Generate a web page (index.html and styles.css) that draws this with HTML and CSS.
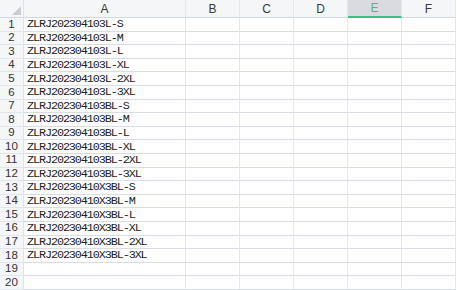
FILE: index.html
```html
<!DOCTYPE html>
<html lang="en">
<head>
    <meta charset="UTF-8">
    <meta name="viewport" content="width=device-width, initial-scale=1.0">
    <title>Sheet1</title>
    <link rel="stylesheet" href="styles.css">
</head>
<body>
    <div id="sheet" class="sheet">
        <div class="corner"><span class="corner-mark"></span></div>
        <div class="col-head">A</div>
        <div class="col-head">B</div>
        <div class="col-head">C</div>
        <div class="col-head">D</div>
        <div class="col-head active">E</div>
        <div class="col-head">F</div>
    </div>

    <script>
        const values = [
            'ZLRJ202304103L-S', 'ZLRJ202304103L-M', 'ZLRJ202304103L-L',
            'ZLRJ202304103L-XL', 'ZLRJ202304103L-2XL', 'ZLRJ202304103L-3XL',
            'ZLRJ202304103BL-S', 'ZLRJ202304103BL-M', 'ZLRJ202304103BL-L',
            'ZLRJ202304103BL-XL', 'ZLRJ202304103BL-2XL', 'ZLRJ202304103BL-3XL',
            'ZLRJ20230410X3BL-S', 'ZLRJ20230410X3BL-M', 'ZLRJ20230410X3BL-L',
            'ZLRJ20230410X3BL-XL', 'ZLRJ20230410X3BL-2XL', 'ZLRJ20230410X3BL-3XL'
        ];

        const sheet = document.getElementById('sheet');
        let html = '';
        for (let r = 1; r <= 20; r++) {
            html += `<div class="row-head">${r}</div>`;
            html += `<div class="cell text">${values[r - 1] || ''}</div>`;
            // empty columns B to F
            for (let c = 0; c < 5; c++) {
                html += '<div class="cell"></div>';
            }
        }
        sheet.insertAdjacentHTML('beforeend', html);
    </script>
</body>
</html>
```

FILE: styles.css
```css
body {
    margin: 0;
    overflow: hidden;
    background-color: #ffffff;
    font-family: "Liberation Sans", sans-serif;
}

.sheet {
    display: grid;
    grid-template-columns: 24px 162px repeat(5, 54px);
    grid-template-rows: 18px repeat(20, 13.6px);
}

.corner {
    position: relative;
    background-color: #f5f6f8;
    border-right: 1px solid #dfe2e8;
    border-bottom: 1px solid #d4d8e0;
}

.corner-mark {
    position: absolute;
    right: 2px;
    bottom: 2px;
    width: 0;
    height: 0;
    border-left: 9px solid transparent;
    border-bottom: 9px solid #c9ccd2;
}

.col-head {
    display: flex;
    align-items: center;
    justify-content: center;
    background-color: #f5f6f8;
    border-right: 1px solid #e4e7ec;
    border-bottom: 1px solid #d4d8e0;
    font-size: 12px;
    color: #3a3a3a;
    box-sizing: border-box;
}

.col-head.active {
    background-color: #d9dbe0;
    border-bottom: 2px solid #3dbf87;
    color: #3dbf87;
}

.row-head {
    display: flex;
    align-items: center;
    justify-content: center;
    background-color: #f5f6f8;
    border-right: 1px solid #dfe2e8;
    border-bottom: 1px solid #e2e5ea;
    font-size: 11.5px;
    line-height: 1;
    color: #333333;
    box-sizing: border-box;
}

.cell {
    border-right: 1px solid #e3e6ee;
    border-bottom: 1px solid #d8dce5;
    box-sizing: border-box;
}

.text {
    display: flex;
    align-items: center;
    padding-left: 3px;
    font-family: "Liberation Mono", monospace;
    font-size: 11.8px;
    letter-spacing: -1.1px;
    color: #222222;
    white-space: nowrap;
}
```
